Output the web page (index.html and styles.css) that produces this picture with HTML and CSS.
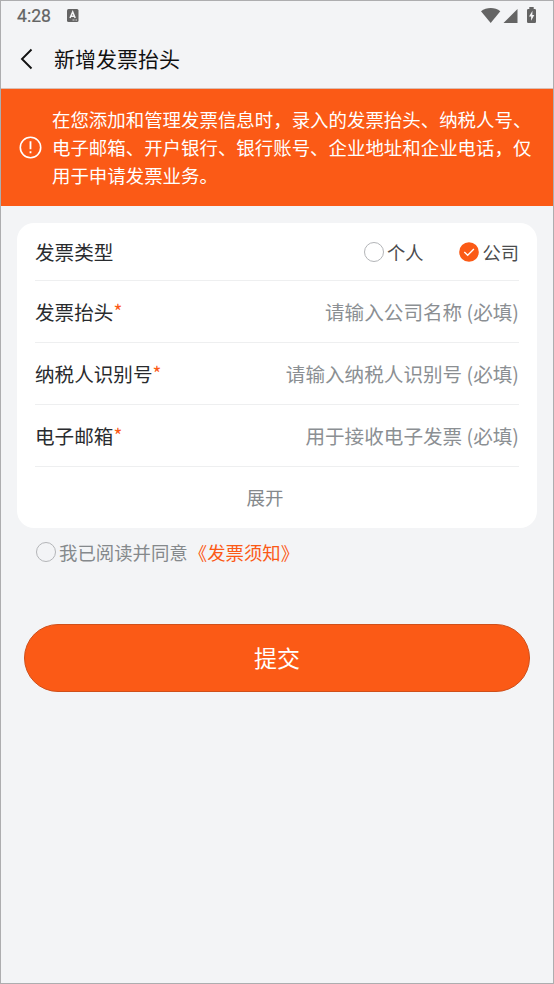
FILE: index.html
```html
<!DOCTYPE html>
<html lang="zh-CN">
<head>
<meta charset="utf-8">
<title>新增发票抬头</title>
<link rel="stylesheet" href="styles.css">
</head>
<body>
<div class="screen">
  <div class="status">
    <span class="time">4:28</span>
    <svg class="app-icon" width="12" height="13" viewBox="0 0 12 13"><rect width="11.5" height="13" rx="1.5" fill="#646464"/><path d="M3 9L5.7 3L8.2 9M4 7.2H7.4" fill="none" stroke="#f3f4f6" stroke-width="1.5"/><path d="M5.5 11H10" stroke="#f3f4f6" stroke-width=".8" stroke-dasharray="2 1"/></svg>
    <svg class="signals" width="56" height="17" viewBox="0 0 56 17" fill="#646464"><path d="M0 4.3C5.5-.1 14 -.1 19.3 4.3L9.7 16Z"/><path d="M36.5 2V16H22.5Z"/><path d="M46 3.2Q46 2 47.2 2H48.3V0H52.7V2H53.8Q55 2 55 3.2V14.8Q55 16 53.8 16H47.2Q46 16 46 14.8Z"/><path d="M51.5 3.8L48 9.4H50.1V13.8L53.3 8H51.3Z" fill="#f3f4f6"/></svg>
  </div>
  <header class="header">
    <svg class="back" width="14" height="22" viewBox="0 0 14 22"><path d="M12.5 1.5L3 11L12.5 20.5" fill="none" stroke="#111" stroke-width="1.9"/></svg>
    <h1 class="title">新增发票抬头</h1>
  </header>
  <section class="notice">
    <svg class="info" width="23" height="23" viewBox="0 0 23 23"><circle cx="11.5" cy="11.5" r="10.2" fill="none" stroke="#fff" stroke-width="1.6"/><path d="M11.5 5.2V13.2M11.5 15.2V17.2" stroke="#fff" stroke-width="1.8"/></svg>
    <p class="notice-text">在您添加和管理发票信息时，录入的发票抬头、纳税人号、<br>电子邮箱、开户银行、银行账号、企业地址和企业电话，仅<br>用于申请发票业务。</p>
  </section>
  <main class="card">
    <div class="row row-type">
      <span class="label">发票类型</span>
      <div class="choices">
        <span class="choice"><i class="radio"></i>个人</span>
        <span class="choice"><svg class="checked" width="20" height="20" viewBox="0 0 20 20"><circle cx="10" cy="10" r="9.8" fill="#fb5a16"/><path d="M5.3 10.1L8.7 13.2L14.9 6.9" fill="none" stroke="#fff" stroke-width="1.4"/></svg>公司</span>
      </div>
    </div>
    <div class="row"><span class="label">发票抬头<b class="star">*</b></span><span class="hint">请输入公司名称 (必填)</span></div>
    <div class="row"><span class="label">纳税人识别号<b class="star">*</b></span><span class="hint">请输入纳税人识别号 (必填)</span></div>
    <div class="row"><span class="label">电子邮箱<b class="star">*</b></span><span class="hint">用于接收电子发票 (必填)</span></div>
    <div class="expand">展开</div>
  </main>
  <div class="agree"><i class="radio"></i><span>我已阅读并同意</span><a class="link">《发票须知》</a></div>
  <button class="submit">提交</button>
</div>
</body>
</html>
```
FILE: styles.css
```css
* { box-sizing: border-box; }
body { margin: 0; font-family: "Noto Sans CJK SC", sans-serif; }
.screen {
  height: 984px;
  border: 1px solid #adadaf;
  background: #f3f4f6;
  display: flex;
  flex-direction: column;
}
.status {
  height: 29px;
  padding: 0 16px;
  display: flex;
  align-items: center;
  color: #646464;
}
.time { font: 400 17.6px/28px Roboto, sans-serif; width: 50px; -webkit-text-stroke: .2px #646464; }
.signals { margin: -1px 0 0 auto; }
.header {
  height: 59px;
  padding-left: 18px;
  display: flex;
  align-items: center;
  border-bottom: 1px solid #d9bfb4;
}
.title { margin: 0 0 2px 21px; font-size: 21px; font-weight: 400; line-height: 30px; color: #111; }
.notice {
  height: 117px;
  padding: 0 0 0 18px;
  display: flex;
  align-items: center;
  background: #fb5a16;
  color: #fff;
}
.notice-text { margin: 1px 0 0 10px; font-size: 18.46px; line-height: 27.7px; white-space: nowrap; }
.card {
  margin: 17px 16px 0;
  height: 305px;
  padding: 0 18px;
  border-radius: 17px;
  background: #fff;
}
.row {
  height: 62px;
  display: flex;
  align-items: center;
  justify-content: space-between;
  border-bottom: 1px solid #eeeff0;
  font-size: 19.6px;
  line-height: 30px;
  color: #292b2e;
}
.row-type { height: 58px; }
.label { display: flex; }
.star { font-size: 19px; font-weight: 400; line-height: 28px; color: #fb5a16; }
.hint { color: #8b8f93; }
.choices { display: flex; gap: 36px; font-size: 18.3px; color: #4b4c4e; }
.choice { display: flex; align-items: center; gap: 3px; }
.radio { width: 20px; height: 20px; border: 1px solid #b3b5b8; border-radius: 50%; }
.expand {
  height: 61px;
  font-size: 18.5px;
  line-height: 60px;
  text-align: center;
  color: #85898c;
  padding-right: 24px;
}
.agree {
  height: 30px;
  margin: 9px 0 0 35px;
  display: flex;
  align-items: center;
  font-size: 18.4px;
  line-height: 30px;
  color: #85898c;
}
.agree .radio { margin-right: 3px; }
.link { color: #fb5a16; margin-left: 1px; }
.submit {
  height: 68px;
  margin: 57px 23px 0;
  padding: 0 0 2px;
  border: 1px solid #cf4f1a;
  border-radius: 34px;
  background: #fb5a16;
  color: #fff;
  font: 400 23px/34px "Noto Sans CJK SC", sans-serif;
}
```
